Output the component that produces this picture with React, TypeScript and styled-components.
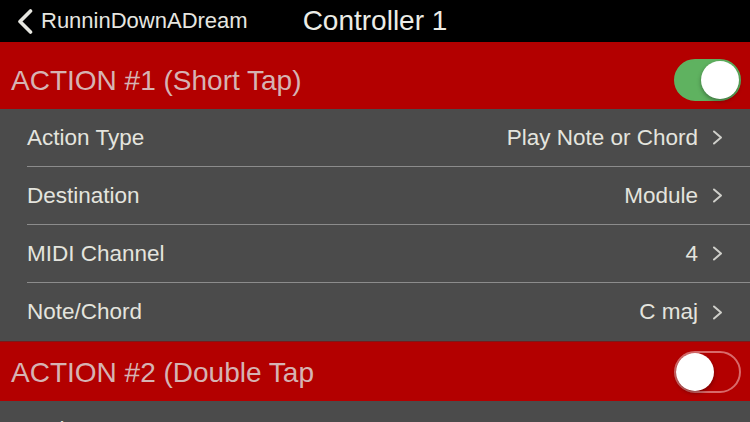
import styled, { createGlobalStyle } from "styled-components"

const GlobalStyle = createGlobalStyle`
   html, body {
      margin: 0;
      padding: 0;
      background: #4b4b4b;
   }

   body {
      font-family: "Liberation Sans", Arial, sans-serif;
      -webkit-font-smoothing: antialiased;
   }
`

const Screen = styled.div`
   width: 750px;
   height: 422px;
   overflow: hidden;
   background: #4b4b4b;
   display: flex;
   flex-direction: column;
`

const NavBar = styled.header`
   flex: none;
   height: 42px;
   background: #000;
   display: grid;
   grid-template-columns: 1fr auto 1fr;
   align-items: center;
`

const BackButton = styled.div`
   display: flex;
   align-items: center;
   gap: 8px;
   padding-left: 17px;
   color: #e6e6e0;
   font-size: 22px;
`

const Title = styled.h1`
   margin: 0;
   color: #ecece6;
   font-size: 28px;
   font-weight: 400;
`

const SectionHeader = styled.div<{ $first?: boolean }>`
   flex: none;
   height: 59px;
   padding-top: ${p => (p.$first ? "8px" : "0")};
   border-top: ${p => (p.$first ? "none" : "1px solid #7a1a1a")};
   background: #b30000;
   display: flex;
   align-items: center;
   justify-content: space-between;
   padding-left: 11px;
   padding-right: 9px;
`

const SectionTitle = styled.span`
   color: #d6b3b3;
   font-size: 28px;
   padding-top: 2px;
`

const Track = styled.div<{ $on: boolean }>`
   position: relative;
   box-sizing: border-box;
   width: 67px;
   height: 42px;
   border-radius: 21px;
   background: ${p => (p.$on ? "#5fb260" : "#b30000")};
   border: 2px solid ${p => (p.$on ? "#5fb260" : "#d86a6a")};
`

const Knob = styled.div<{ $on: boolean }>`
   position: absolute;
   top: 0;
   left: ${p => (p.$on ? "25px" : "0")};
   width: 38px;
   height: 38px;
   border-radius: 50%;
   background: #fff;
   box-shadow: 0 2px 4px rgba(0, 0, 0, 0.35);
`

const Row = styled.div<{ $last?: boolean }>`
   flex: none;
   height: 58px;
   box-sizing: border-box;
   margin-left: 27px;
   padding-right: 27px;
   display: flex;
   align-items: center;
   justify-content: space-between;
   color: #e4e4de;
   font-size: 22.5px;
   border-bottom: ${p => (p.$last ? "none" : "1.5px solid #8c8c8c")};
`

const Value = styled.span`
   display: flex;
   align-items: center;
   gap: 14px;
`

function Chevron() {
   return (
      <svg width="11" height="15" viewBox="0 0 11 15">
         <polyline points="2,1.5 9,7.5 2,13.5" fill="none" stroke="#cfcfca" strokeWidth="2" strokeLinecap="round" strokeLinejoin="round" />
      </svg>
   )
}

function BackChevron() {
   return (
      <svg width="16" height="25" viewBox="0 0 16 25">
         <polyline points="13.5,2 3,12.5 13.5,23" fill="none" stroke="#e6e6e0" strokeWidth="3.6" strokeLinecap="round" strokeLinejoin="round" />
      </svg>
   )
}

function Toggle({ on }: { on: boolean }) {
   return (
      <Track $on={on}>
         <Knob $on={on} />
      </Track>
   )
}

const actionRows = [
   { label: "Action Type", value: "Play Note or Chord" },
   { label: "Destination", value: "Module" },
   { label: "MIDI Channel", value: "4" },
   { label: "Note/Chord", value: "C maj" },
]

export default function App() {
   return (
      <>
         <GlobalStyle />
         <Screen>
            <NavBar>
               <BackButton>
                  <BackChevron />
                  RunninDownADream
               </BackButton>
               <Title>Controller 1</Title>
               <span />
            </NavBar>

            <SectionHeader $first>
               <SectionTitle>ACTION #1 (Short Tap)</SectionTitle>
               <Toggle on />
            </SectionHeader>

            {actionRows.map((row, i) => (
               <Row key={row.label} $last={i === actionRows.length - 1}>
                  <span>{row.label}</span>
                  <Value>
                     {row.value}
                     <Chevron />
                  </Value>
               </Row>
            ))}

            <SectionHeader>
               <SectionTitle>ACTION #2 (Double Tap</SectionTitle>
               <Toggle on={false} />
            </SectionHeader>

            <Row $last>
               <span>Action Type</span>
               <Value>
                  None
                  <Chevron />
               </Value>
            </Row>
         </Screen>
      </>
   )
}
